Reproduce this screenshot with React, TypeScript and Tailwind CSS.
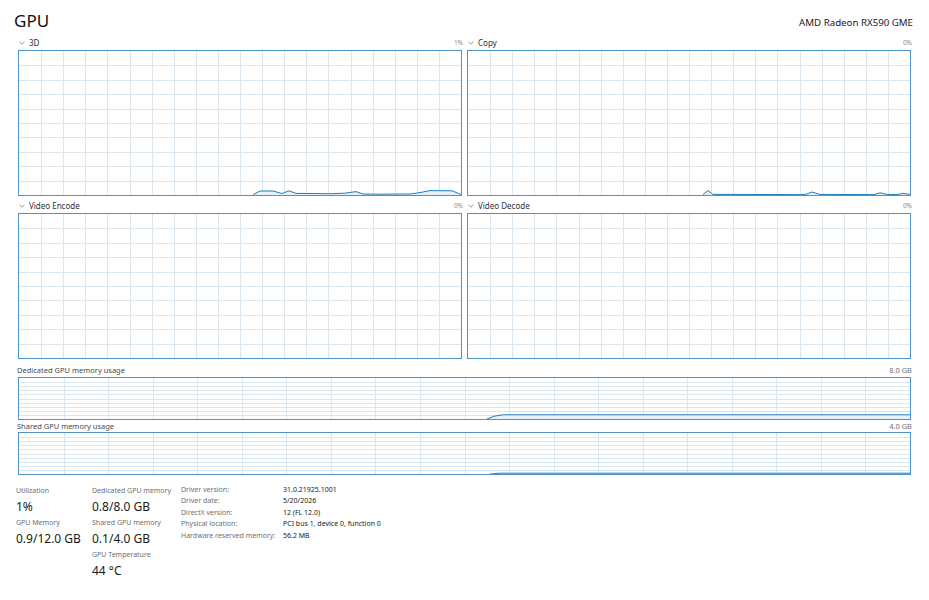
import React from "react";

type Pt = [number, number];

interface ChartProps {
  width: number;
  height: number;
  cols: number;
  rows: number;
  line?: Pt[];
  className?: string;
}

const GRID = "#dae7f1";
const LINE = "#1f7fc0";
const FILL = "#e7f1f9";

function Chart({ width, height, cols, rows, line, className }: ChartProps) {
  const iw = width - 2;
  const ih = height - 2;
  const vs = Array.from({ length: cols - 1 }, (_, i) => Math.round(((i + 1) * iw) / cols) + 0.5);
  const hs = Array.from({ length: rows - 1 }, (_, i) => Math.round(((i + 1) * ih) / rows) + 0.5);
  const pts = line ? line.map(([x, y]) => `${x},${y}`).join(" ") : "";
  const area = line ? `${line[0][0]},${ih} ${pts} ${line[line.length - 1][0]},${ih}` : "";

  return (
    <div className={`border border-[#4d93c6] bg-white ${className ?? ""}`} style={{ width, height }}>
      <svg width={iw} height={ih} className="block" shapeRendering="crispEdges">
        {hs.map((y) => (
          <line key={`h${y}`} x1={0} x2={iw} y1={y} y2={y} stroke={GRID} strokeWidth={1} />
        ))}
        {vs.map((x) => (
          <line key={`v${x}`} x1={x} x2={x} y1={0} y2={ih} stroke={GRID} strokeWidth={1} />
        ))}
        {line ? (
          <g shapeRendering="geometricPrecision">
            <polygon points={area} fill={FILL} />
            <polyline points={pts} fill="none" stroke={LINE} strokeWidth={1} strokeLinejoin="round" />
          </g>
        ) : null}
      </svg>
    </div>
  );
}

function Chevron() {
  return (
    <svg width="6" height="4" viewBox="0 0 6 4" className="ml-[1px] mr-[4px] block">
      <path d="M0.5 0.8 L3 3.2 L5.5 0.8" fill="none" stroke="#8a8a8a" strokeWidth="0.9" />
    </svg>
  );
}

function EngineHeader({ name, pct }: { name: string; pct: string }) {
  return (
    <div className="flex h-[14px] items-center justify-between">
      <div className="flex items-center text-[8px] leading-[14px] text-[#303030]">
        <Chevron />
        <span>{name}</span>
      </div>
      <span className="-mr-[1px] text-[6.5px] leading-[14px] text-[#8c8c8c]">{pct}</span>
    </div>
  );
}

// page coords -> inner coords of a box
const rel = (pts: Pt[], left: number, top: number): Pt[] => pts.map(([x, y]) => [x - left - 1, y - top - 1]);

const line3d = rel(
  [
    [253, 194.6], [260, 191], [273, 191], [282, 193.5], [289, 190.8], [296, 193.4],
    [330, 193.7], [345, 193.2], [356, 191.6], [363, 194], [380, 194.2], [410, 194], [420, 192.6],
    [430, 190.6], [452, 190.8], [461, 194.4],
  ],
  18,
  50
);

const lineCopy = rel(
  [
    [703, 194.6], [708, 190.5], [713, 194.4], [805, 194.6], [812, 192], [820, 194.4],
    [874, 194.6], [880, 192.8], [887, 194.4], [897, 194.6], [903, 193.3], [910, 194.4],
  ],
  467,
  50
);

const lineDedicated = rel(
  [
    [487, 419], [494, 416.2], [503, 414.8], [910, 414.8],
  ],
  18,
  377
);

const lineShared = rel(
  [
    [490, 474], [500, 473.2], [910, 473.2],
  ],
  18,
  432
);

function Stat({ label, value }: { label: string; value: string }) {
  return (
    <div>
      <div className="text-[7px] leading-[11px] text-[#6f6f6f]">{label}</div>
      <div className="text-[12px] leading-[21px] text-[#1a1a1a]">{value}</div>
    </div>
  );
}

const info: [string, string][] = [
  ["Driver version:", "31.0.21925.1001"],
  ["Driver date:", "5/20/2026"],
  ["DirectX version:", "12 (FL 12.0)"],
  ["Physical location:", "PCI bus 1, device 0, function 0"],
  ["Hardware reserved memory:", "56.2 MB"],
];

export default function App() {
  return (
    <div className="h-[600px] w-[929px] overflow-hidden bg-white font-['Noto_Sans',sans-serif] text-[#1a1a1a]">
      <div className="flex h-[36px] items-start justify-between pl-[14px] pr-[16px]">
        <h1 className="mt-[10px] text-[17px] leading-[22px] text-[#111]">GPU</h1>
        <span className="mt-[16px] text-[9.7px] leading-[14px] text-[#1a1a1a]">AMD Radeon RX590 GME</span>
      </div>

      <div className="ml-[18px] w-[893px]">
        <div className="grid grid-cols-2 gap-x-[5px]">
          <div>
            <EngineHeader name="3D" pct="1%" />
            <Chart width={444} height={146} cols={20} rows={10} line={line3d} />
          </div>
          <div>
            <EngineHeader name="Copy" pct="0%" />
            <Chart width={444} height={146} cols={20} rows={10} line={lineCopy} />
          </div>
          <div className="mt-[3px]">
            <EngineHeader name="Video Encode" pct="0%" />
            <Chart width={444} height={146} cols={20} rows={10} />
          </div>
          <div className="mt-[3px]">
            <EngineHeader name="Video Decode" pct="0%" />
            <Chart width={444} height={146} cols={20} rows={10} />
          </div>
        </div>

        <div className="mt-[4px] flex h-[14px] items-center justify-between text-[7.5px] leading-[14px]">
          <span className="-ml-[1px] text-[#4a4a4a]">Dedicated GPU memory usage</span>
          <span className="-mr-[1px] text-[#6f6f6f]">8.0 GB</span>
        </div>
        <Chart width={893} height={43} cols={20} rows={10} line={lineDedicated} />

        <div className="flex h-[12px] items-center justify-between text-[7.5px] leading-[12px]">
          <span className="-ml-[1px] text-[#4a4a4a]">Shared GPU memory usage</span>
          <span className="-mr-[1px] text-[#6f6f6f]">4.0 GB</span>
        </div>
        <Chart width={893} height={43} cols={20} rows={10} line={lineShared} />
      </div>

      <div className="mt-[10px] flex items-start pl-[16px]">
        <div className="w-[76px]">
          <Stat label="Utilization" value="1%" />
          <Stat label="GPU Memory" value="0.9/12.0 GB" />
        </div>
        <div className="w-[89px]">
          <Stat label="Dedicated GPU memory" value="0.8/8.0 GB" />
          <Stat label="Shared GPU memory" value="0.1/4.0 GB" />
          <Stat label="GPU Temperature" value="44 °C" />
        </div>
        <div className="-mt-[1px] grid grid-cols-[102px_auto] content-start text-[7px] leading-[11.4px]">
          {info.map(([k, v]) => (
            <React.Fragment key={k}>
              <span className="text-[#6f6f6f]">{k}</span>
              <span className="text-[#1a1a1a]">{v}</span>
            </React.Fragment>
          ))}
        </div>
      </div>
    </div>
  );
}
